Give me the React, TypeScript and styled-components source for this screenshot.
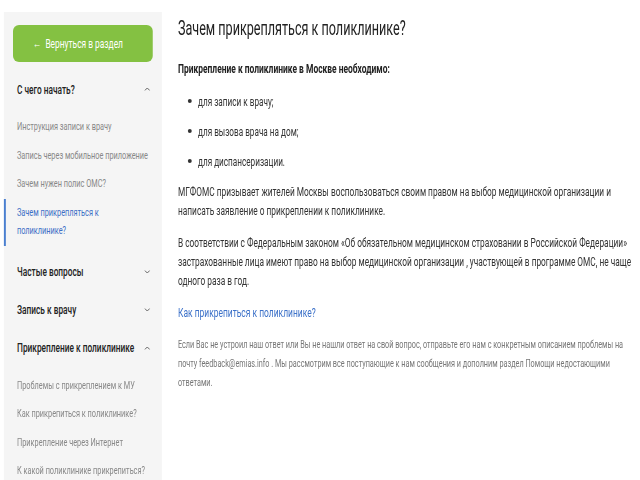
import React from 'react'
import styled, { createGlobalStyle } from 'styled-components'

// The reference is a narrow, condensed rendering: the page is laid out at a
// wider width and squeezed horizontally so the Roboto text gets condensed.
const SQUEEZE = 0.65
const x = (px: number) => px / SQUEEZE

const GlobalStyle = createGlobalStyle`
    html, body {
        margin: 0;
        padding: 0;
        background: #fff;
        overflow: hidden;
    }
    body {
        font-family: Roboto, "Liberation Sans", sans-serif;
        color: #333;
    }
`

const Page = styled.div`
    display: flex;
    width: ${x(640)}px;
    height: 480px;
    transform: scaleX(${SQUEEZE});
    transform-origin: left top;
`

const Sidebar = styled.aside`
    flex: 0 0 auto;
    width: ${x(158)}px;
    min-width: 0;
    margin: 12px 0 0 ${x(4)}px;
    padding-top: 13px;
    background-color: #f5f5f5;
`

const BackButton = styled.button`
    display: flex;
    align-items: center;
    justify-content: center;
    gap: ${x(4)}px;
    width: ${x(140)}px;
    height: 37px;
    margin: 0 ${x(9)}px 8px;
    padding: 0 ${x(10)}px 0 0;
    border: 0;
    border-radius: ${x(6)}px / 6px;
    background-color: #84c142;
    color: #fff;
    font-family: inherit;
    font-size: 12.9px;
    cursor: pointer;
`

const SectionHead = styled.div`
    display: flex;
    align-items: center;
    justify-content: space-between;
    height: 38px;
    padding: 0 ${x(12)}px 0 ${x(13)}px;
    font-size: 12.8px;
    font-weight: 500;
    color: #222;
    white-space: nowrap;
`

const SubList = styled.ul`
    list-style: none;
    margin: 0;
    padding: 5px 0 7px;
`

const SubItem = styled.li<{ $active?: boolean }>`
    padding: 5px ${x(6)}px 5px ${p => (p.$active ? x(11) : x(13))}px;
    border-left: ${p => (p.$active ? `${x(2)}px solid #4a7fd0` : '0')};
    font-size: 11.3px;
    line-height: 18.5px;
    color: ${p => (p.$active ? '#3d6fc6' : '#888')};
`

const Main = styled.main`
    flex: 1;
    min-width: 0;
    padding: 17px ${x(3)}px 0 ${x(16)}px;
`

const Title = styled.h1`
    margin: 0 0 19px;
    font-size: 19.4px;
    font-weight: 400;
    line-height: 24px;
    color: #222;
`

const Lead = styled.p`
    margin: 0 0 8px;
    font-size: 13px;
    font-weight: 700;
    line-height: 18px;
    color: #222;
`

const Bullets = styled.ul`
    margin: 0 0 6px;
    padding: 0 0 0 ${x(10)}px;
    list-style: none;
`

const Bullet = styled.li`
    display: flex;
    align-items: center;
    gap: ${x(6)}px;
    height: 30px;
    font-size: 12.6px;
    color: #333;

    &::before {
        content: '';
        width: ${x(4)}px;
        height: 4px;
        border-radius: 50%;
        background: #333;
    }
`

const Para = styled.p`
    margin: 0 0 13px;
    font-size: 12.8px;
    line-height: 19px;
    color: #333;
`

const Link = styled.a`
    display: block;
    margin: 0 0 13px;
    font-size: 13px;
    line-height: 19px;
    color: #3d72c9;
    text-decoration: none;
`

const Note = styled.p`
    margin: 0;
    font-size: 11.2px;
    line-height: 19px;
    color: #777;
`

const Chevron = ({ up }: { up?: boolean }) => (
    <svg width={x(6)} height="4" viewBox="0 0 6 4" preserveAspectRatio="none">
        <polyline
            points={up ? '0.5,3.5 3,1 5.5,3.5' : '0.5,0.5 3,3 5.5,0.5'}
            fill="none"
            stroke="#666"
            strokeWidth="1"
        />
    </svg>
)

const App = () => {
    return (
        <Page>
            <GlobalStyle />
            <Sidebar>
                <BackButton>
                    <span>←</span>
                    <span>Вернуться в раздел</span>
                </BackButton>

                <SectionHead>
                    С чего начать?
                    <Chevron up />
                </SectionHead>
                <SubList>
                    <SubItem>Инструкция записи к врачу</SubItem>
                    <SubItem>Запись через мобильное приложение</SubItem>
                    <SubItem>Зачем нужен полис ОМС?</SubItem>
                    <SubItem $active>
                        Зачем прикрепляться к
                        <br />
                        поликлинике?
                    </SubItem>
                </SubList>

                <SectionHead>
                    Частые вопросы
                    <Chevron />
                </SectionHead>
                <SectionHead>
                    Запись к врачу
                    <Chevron />
                </SectionHead>
                <SectionHead>
                    Прикрепление к поликлинике
                    <Chevron up />
                </SectionHead>
                <SubList>
                    <SubItem>Проблемы с прикреплением к МУ</SubItem>
                    <SubItem>Как прикрепиться к поликлинике?</SubItem>
                    <SubItem>Прикрепление через Интернет</SubItem>
                    <SubItem>К какой поликлинике прикрепиться?</SubItem>
                </SubList>
            </Sidebar>

            <Main>
                <Title>Зачем прикрепляться к поликлинике?</Title>
                <Lead>Прикрепление к поликлинике в Москве необходимо:</Lead>
                <Bullets>
                    <Bullet>для записи к врачу;</Bullet>
                    <Bullet>для вызова врача на дом;</Bullet>
                    <Bullet>для диспансеризации.</Bullet>
                </Bullets>
                <Para>
                    МГФОМС призывает жителей Москвы воспользоваться своим правом на выбор медицинской организации и
                    написать заявление о прикреплении к поликлинике.
                </Para>
                <Para>
                    В соответствии с Федеральным законом «Об обязательном медицинском страховании в Российской Федерации»
                    застрахованные лица имеют право на выбор медицинской организации , участвующей в программе ОМС, не чаще
                    одного раза в год.
                </Para>
                <Link href="#">Как прикрепиться к поликлинике?</Link>
                <Note>
                    Если Вас не устроил наш ответ или Вы не нашли ответ на свой вопрос, отправьте его нам с конкретным описанием проблемы на
                    почту feedback@emias.info . Мы рассмотрим все поступающие к нам сообщения и дополним раздел Помощи недостающими
                    ответами.
                </Note>
            </Main>
        </Page>
    )
}

export default App
